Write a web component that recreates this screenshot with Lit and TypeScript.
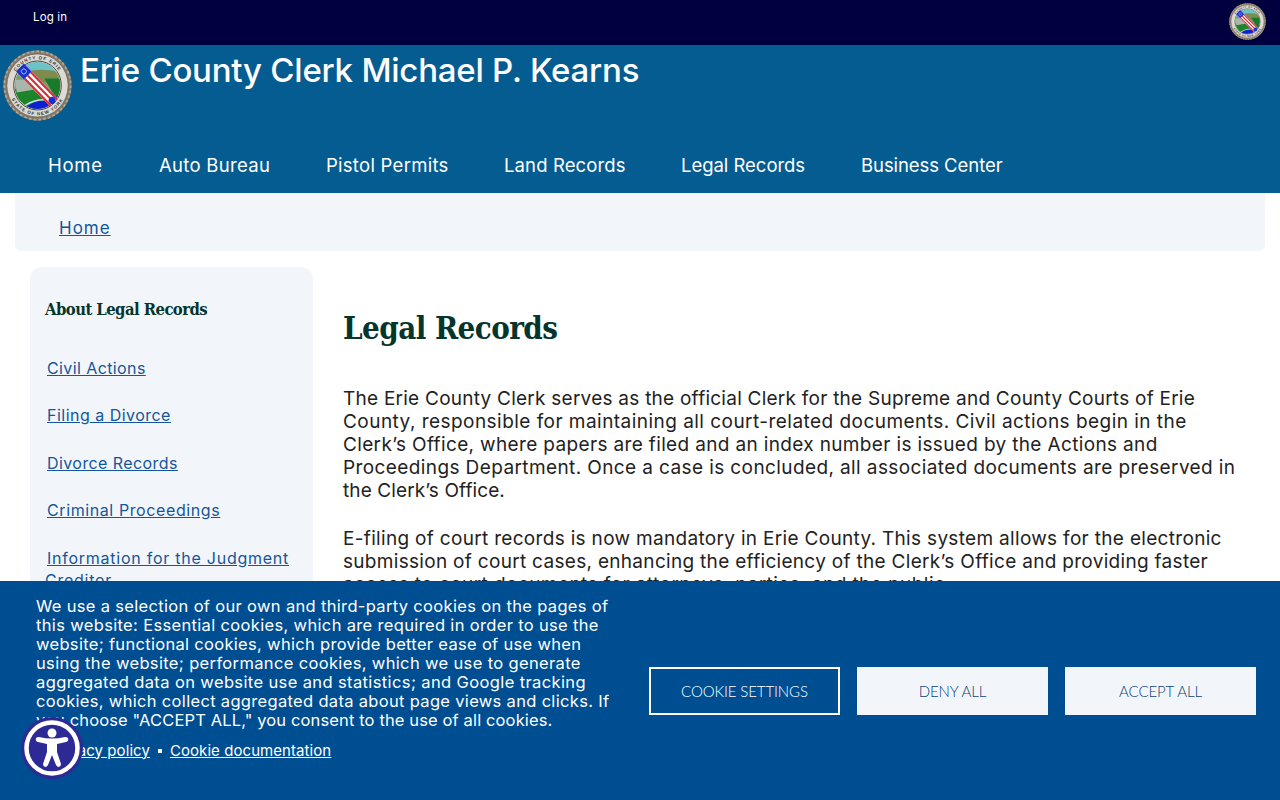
import { LitElement, html, css, svg } from "lit";
import { customElement } from "lit/decorators.js";

@customElement("county-seal")
class CountySeal extends LitElement {
  static styles = css`
    :host { display: block; }
    svg { display: block; width: 100%; height: 100%; }
    text { font-family: "Liberation Sans", sans-serif; font-size: 6.5px; font-weight: 700; fill: #333; letter-spacing: 1.4px; }
  `;
  render() {
    return html`<svg viewBox="0 0 100 100" preserveAspectRatio="none">
      <defs>
        <clipPath id="inner"><circle cx="50" cy="50" r="33"></circle></clipPath>
        <path id="arcTop" d="M 13 50 A 37 37 0 0 1 87 50"></path>
        <path id="arcBot" d="M 8 50 A 42 42 0 0 0 92 50"></path>
      </defs>
      <circle cx="50" cy="50" r="49.5" fill="#85796a"></circle>
      <circle cx="50" cy="50" r="48" fill="none" stroke="#b3a78f" stroke-width="2.5" stroke-dasharray="4 3"></circle>
      <circle cx="50" cy="50" r="44.5" fill="#dcdad2" stroke="#5e5a50" stroke-width="1"></circle>
      ${svg`<text><textPath href="#arcTop" startOffset="50%" text-anchor="middle">COUNTY OF ERIE</textPath></text>
      <text><textPath href="#arcBot" startOffset="50%" text-anchor="middle">STATE OF NEW YORK</textPath></text>`}
      <circle cx="50" cy="50" r="34.5" fill="#e6e6e0" stroke="#3f3f3a" stroke-width="1.4"></circle>
      <g clip-path="url(#inner)">
        <rect x="15" y="15" width="70" height="70" fill="#7f9d70"></rect>
        <rect x="15" y="15" width="70" height="14" fill="#6cc2c9"></rect>
        <path d="M 36 31 Q 55 24 86 33 L 86 50 L 50 44 Z" fill="#7d8c4e"></path>
        <path d="M 15 56 L 36 50 L 68 76 L 30 88 L 15 72 Z" fill="#1c8529"></path>
        <path d="M 60 40 L 86 40 L 86 60 L 78 70 Z" fill="#197a2a"></path>
        <path d="M 17 42 L 36 42 L 44 56 L 20 60 Z" fill="#a9b6ab"></path>
        <path d="M 28 86 Q 40 72 58 71 L 86 62 L 86 90 L 28 90 Z" fill="#0f1fd8"></path>
        <path d="M 32 78 Q 44 70 60 70" fill="none" stroke="#cfe0e8" stroke-width="2"></path>
      </g>
      <g transform="rotate(45 50 50)">
        <rect x="14" y="42" width="70" height="16" fill="#fff"></rect>
        <rect x="30" y="42" width="54" height="3.2" fill="#d4303a"></rect>
        <rect x="30" y="48.4" width="54" height="3.2" fill="#d4303a"></rect>
        <rect x="30" y="54.8" width="54" height="3.2" fill="#d4303a"></rect>
        <rect x="14" y="42" width="16" height="16" fill="#1a2fd0"></rect>
        <circle cx="22" cy="50" r="3.6" fill="none" stroke="#dfe6ff" stroke-width="1"></circle>
        <circle cx="80" cy="50" r="5" fill="#1a2fd0"></circle>
      </g>
    </svg>`;
  }
}

type Line = [string, number];
const p1: Line[] = [
  ["The Erie County Clerk serves as the official Clerk for the Supreme and County Courts of Erie", 0.245],
  ["County, responsible for maintaining all court-related documents. Civil actions begin in the", 0.46],
  ["Clerk’s Office, where papers are filed and an index number is issued by the Actions and", 0.35],
  ["Proceedings Department. Once a case is concluded, all associated documents are preserved in", 0.395],
  ["the Clerk’s Office.", 0.1],
];
const p2: Line[] = [
  ["E-filing of court records is now mandatory in Erie County. This system allows for the electronic", 0.315],
  ["submission of court cases, enhancing the efficiency of the Clerk’s Office and providing faster", 0.305],
  ["access to court documents for attorneys, parties, and the public.", 0.43],
];
const cookieLines: Line[] = [
  ["We use a selection of our own and third-party cookies on the pages of", 0.33],
  ["this website: Essential cookies, which are required in order to use the", 0.34],
  ["website; functional cookies, which provide better ease of use when", 0.31],
  ["using the website; performance cookies, which we use to generate", 0.35],
  ["aggregated data on website use and statistics; and Google tracking", 0.38],
  ["cookies, which collect aggregated data about page views and clicks. If", 0.32],
  ["you choose \"ACCEPT ALL,\" you consent to the use of all cookies.", 0.13],
];
const nav: Line[] = [
  ["Home", 0.7],
  ["Auto Bureau", 0.3],
  ["Pistol Permits", 0.27],
  ["Land Records", 0.12],
  ["Legal Records", -0.03],
  ["Business Center", -0.07],
];
const side: Line[] = [
  ["Civil Actions", 0.4],
  ["Filing a Divorce", 0.48],
  ["Divorce Records", 0.42],
  ["Criminal Proceedings", 0.6],
  ["Information for the Judgment Creditor", 0.75],
];
const lines = (ls: Line[]) => ls.map(([t, s]) => html`<span style="letter-spacing:${s}px">${t}</span>`);
const anchors = (ls: Line[]) => ls.map(([t, s]) => html`<a href="#" style="letter-spacing:${s}px">${t}</a>`);

@customElement("app-root")
class AppRoot extends LitElement {
  static styles = css`
    :host { display: block; font-family: Inter, "Open Sans", sans-serif; height: 800px; overflow: hidden; background: #fff; }
    a { color: inherit; }
    .top { height: 45px; background: #00003f; color: #fff; display: flex; justify-content: space-between; box-sizing: border-box; padding: 3px 14px 0 33px; }
    .login { font-size: 11.5px; line-height: 28px; text-decoration: none; letter-spacing: 0.15px; }
    .top county-seal { width: 37px; height: 37px; }
    .head { height: 148px; background: #055c91; color: #fff; box-sizing: border-box; display: flex; flex-direction: column; justify-content: space-between; }
    .brand { display: flex; padding: 5px 0 0 3px; gap: 8px; }
    .brand county-seal { width: 69px; height: 71px; }
    .brand h2 { margin: 0; font-size: 33px; font-weight: 500; line-height: 40px; letter-spacing: -0.23px; }
    nav { display: grid; grid-template-columns: 111px 167px 178px 177px 180px auto; padding: 0 0 15px 48px; font-size: 18.5px; line-height: 26px; }
    nav a { text-decoration: none; }
    .crumb { margin: 0 15px; height: 58px; box-sizing: border-box; background: #f2f6fa; border-radius: 0 0 6px 6px; padding: 25px 0 0 44px; font-size: 17px; line-height: 21px; color: #15559a; letter-spacing: 1px; }
    .body { display: flex; padding: 16px 0 0 30px; gap: 30px; }
    aside { width: 283px; height: 520px; flex: none; box-sizing: border-box; background: #f2f6fa; border-radius: 12px; padding: 32px 15px 0; }
    aside h3 { margin: 0 0 36.7px; font-family: "DejaVu Serif Condensed", "DejaVu Serif", serif; font-size: 16.5px; line-height: 21px; color: #05352c; font-weight: 700; letter-spacing: -0.55px; }
    aside a { display: block; color: #15559a; font-size: 16px; line-height: 22px; margin-bottom: 25.5px; text-indent: 2px; }
    main { width: 900px; padding-top: 41px; }
    h1 { margin: 0 0 39px; font-family: "DejaVu Serif Condensed", "DejaVu Serif", serif; font-size: 31px; line-height: 40px; color: #05352c; font-weight: 700; letter-spacing: -0.55px; }
    .para { margin: 0 0 25px; font-size: 19px; line-height: 23px; color: #222; white-space: nowrap; }
    .para span { display: block; }
    .cookie { position: fixed; left: 0; right: 0; bottom: 0; height: 219px; background: #004e92; color: #fff; display: flex; justify-content: space-between; box-sizing: border-box; padding: 16px 24px 0 36px; }
    .ctext { font-size: 16.5px; line-height: 19px; white-space: nowrap; }
    .ctext span { display: block; }
    .clinks { margin: 10.5px 0 0 14px; display: flex; align-items: center; gap: 8px; font-size: 15px; line-height: 20px; letter-spacing: 0.07px; }
    .dot { width: 4px; height: 4px; background: #fff; }
    .btns { display: flex; gap: 17px; padding-top: 70px; }
    button { width: 191px; height: 48px; box-sizing: border-box; border: none; font-family: Lato, sans-serif; font-size: 15px; font-weight: 300; letter-spacing: -0.1px; background: #f2f6fa; color: #0c4478; }
    button.ghost { background: transparent; border: 2px solid #fff; color: #fff; }
    .a11y { position: fixed; left: 21px; top: 717px; width: 62px; height: 62px; }
    .a11y svg { display: block; width: 100%; height: 100%; }
  `;
  render() {
    return html`
      <div class="top"><a class="login" href="#">Log in</a><county-seal></county-seal></div>
      <header class="head">
        <div class="brand"><county-seal></county-seal><h2>Erie County Clerk Michael P. Kearns</h2></div>
        <nav>${anchors(nav)}</nav>
      </header>
      <div class="crumb"><a href="#">Home</a></div>
      <div class="body">
        <aside>
          <h3>About Legal Records</h3>
          ${anchors(side)}
        </aside>
        <main>
          <h1>Legal Records</h1>
          <p class="para">${lines(p1)}</p>
          <p class="para">${lines(p2)}</p>
        </main>
      </div>
      <section class="cookie">
        <div>
          <div class="ctext">${lines(cookieLines)}</div>
          <div class="clinks"><a href="#">Privacy policy</a><i class="dot"></i><a href="#">Cookie documentation</a></div>
        </div>
        <div class="btns">
          <button class="ghost">COOKIE SETTINGS</button>
          <button>DENY ALL</button>
          <button>ACCEPT ALL</button>
        </div>
      </section>
      <div class="a11y">
        <svg viewBox="0 0 62 62">
          <circle cx="31" cy="31" r="31" fill="#2d2a96"></circle>
          <circle cx="31" cy="31" r="25.5" fill="none" stroke="#fff" stroke-width="4.5"></circle>
          <circle cx="31" cy="16" r="4.5" fill="#fff"></circle>
          <path d="M 15 21 Q 14 24 17 25 L 26 27 L 26 35 L 22 47 Q 22 49 24 50 Q 26 50 27 48 L 31 38 L 35 48 Q 36 50 38 50 Q 40 49 40 47 L 36 35 L 36 27 L 45 25 Q 48 24 47 21 Q 46 20 44 20 Q 31 23 18 20 Q 16 20 15 21 Z" fill="#fff"></path>
        </svg>
      </div>
    `;
  }
}
